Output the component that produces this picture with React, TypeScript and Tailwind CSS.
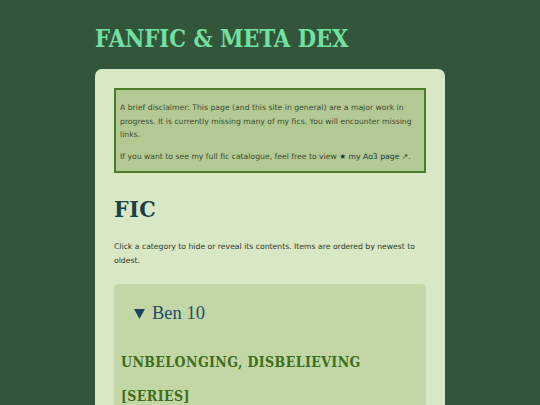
import React from "react";

const serif = "font-['DejaVu_Serif_Condensed','DejaVu_Serif',serif]";
const sans = "font-['DejaVu_Sans','Liberation_Sans',sans-serif]";

export default function App() {
  return (
    <div className="h-[405px] overflow-hidden bg-[#33563a] px-[95px] pt-[24px]">
      <h1
        className={`${serif} text-[23.5px] font-bold leading-[30px] text-[#72e0a2]`}
      >
        FANFIC &amp; META DEX
      </h1>
      <div className="mt-[15px] rounded-[7px] bg-[#d8e7c4] px-[19px] pt-[19px] pb-4">
        <div
          className={`${sans} border-2 border-[#4c7a2b] bg-[#b2c994] px-[4px] pt-[11px] pb-[8px] text-[7.7px] leading-[13.5px] text-[#3d4a2f]`}
        >
          <p>
            A brief disclaimer: This page (and this site in general) are a major
            work in progress. It is currently missing many of my fics. You will
            encounter missing links.
          </p>
          <p className="mt-[8px]">
            If you want to see my full fic catalogue, feel free to view{" "}
            <span className="text-[#173a3a]">★ my Ao3 page ↗</span>.
          </p>
        </div>

        <h2
          className={`${serif} mt-[21px] text-[23px] font-bold leading-[30px] tracking-[0.5px] text-[#17404a]`}
        >
          FIC
        </h2>
        <p
          className={`${sans} mt-[16px] text-[7.7px] leading-[13.5px] text-[#2e3a2a]`}
        >
          Click a category to hide or reveal its contents. Items are ordered by
          newest to oldest.
        </p>

        <div className="mt-[17px] rounded-[4px] bg-[#c3d7a6] px-[7px] pt-[17px] pb-6">
          <div className="flex items-center gap-[7px] pl-[13px] font-['Liberation_Serif',serif] text-[18.5px] leading-[24px] text-[#1d4f68]">
            <svg width="11" height="10" viewBox="0 0 11 10" className="mt-[1px]">
              <path d="M0 0 H11 L5.5 10 Z" fill="#1a4660" />
            </svg>
            <span>Ben 10</span>
          </div>
          <h3
            className={`${serif} mt-[20px] text-[14px] font-bold leading-[34px] tracking-[0.4px] text-[#3d6e1c]`}
          >
            UNBELONGING, DISBELIEVING
            <br />
            [SERIES]
          </h3>
        </div>
      </div>
    </div>
  );
}
